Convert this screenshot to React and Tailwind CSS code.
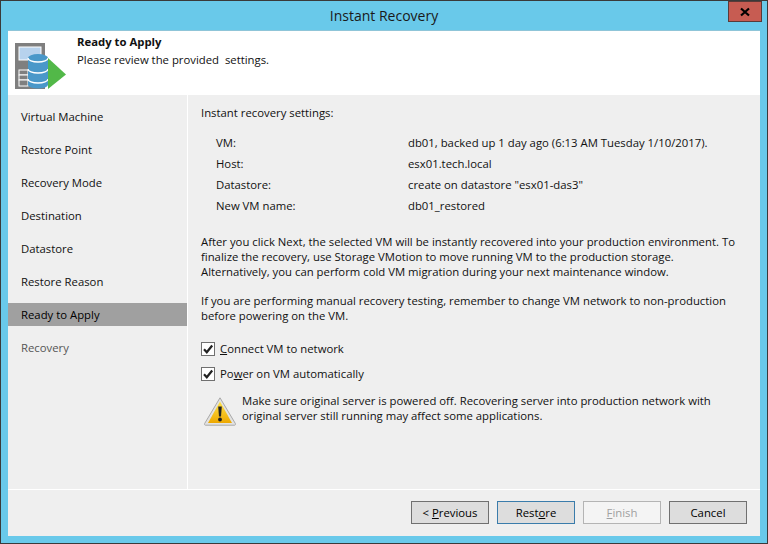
const steps = ['Virtual Machine', 'Restore Point', 'Recovery Mode', 'Destination', 'Datastore', 'Restore Reason', 'Ready to Apply', 'Recovery'];

const details = [
  ['VM:', 'db01, backed up 1 day ago (6:13 AM Tuesday 1/10/2017).'],
  ['Host:', 'esx01.tech.local'],
  ['Datastore:', 'create on datastore "esx01-das3"'],
  ['New VM name:', 'db01_restored'],
];

function WizardIcon() {
  return (
    <svg width="56" height="50" viewBox="0 0 56 50" className="shrink-0">
      <rect x="0" y="0" width="30" height="46" fill="#7f7f7f" />
      <rect x="4" y="4" width="22" height="13" fill="#b7d2ed" stroke="#fff" strokeWidth="1" />
      <rect x="4" y="27" width="9" height="5" fill="#7f7f7f" stroke="#fff" />
      <rect x="4" y="32" width="9" height="5" fill="#7f7f7f" stroke="#fff" />
      <rect x="4" y="37" width="9" height="6" fill="#7f7f7f" stroke="#fff" />
      <path d="M13 16a10 4 0 0 1 20 0v27a10 3.5 0 0 1-20 0z" fill="#4a98c9" transform="translate(0 -1)" />
      <path d="M13 15a10 4 0 0 0 20 0M13 26a10 4 0 0 0 20 0M13 36a10 4 0 0 0 20 0" fill="none" stroke="#fff" strokeWidth="1.3" />
      <path d="M33 15l18 16.5L33 46z" fill="#52b848" />
    </svg>
  );
}

function WarningIcon() {
  return (
    <svg width="32" height="29" viewBox="0 0 32 29" className="shrink-0">
      <defs>
        <linearGradient id="warn" x1="0" y1="0" x2="0" y2="1">
          <stop offset="0" stopColor="#ffe24a" />
          <stop offset="1" stopColor="#eda800" />
        </linearGradient>
      </defs>
      <path d="M16 .8L31.4 26.6a1 1 0 0 1-.9 1.6H1.5a1 1 0 0 1-.9-1.6z" fill="#e2e2e2" stroke="#a8a8a8" />
      <path d="M16 4.5L28 26H4z" fill="url(#warn)" />
      <path d="M14.2 9.5h3.6l-.8 10h-2z" fill="#222" />
      <circle cx="16" cy="22.5" r="1.9" fill="#222" />
    </svg>
  );
}

function Check({ label }) {
  return (
    <div className="flex items-center h-[17px]">
      <span className="w-[14px] h-[14px] border border-[#707070] bg-white flex items-center justify-center">
        <svg width="12" height="12" viewBox="0 0 12 12">
          <path d="M2 6.2l2.8 3L10.2 2.5" fill="none" stroke="#222" strokeWidth="2.2" />
        </svg>
      </span>
      <span className="ml-[5px]">{label}</span>
    </div>
  );
}

function Btn({ children, kind }) {
  const cls = kind === 'default'
    ? 'border-[#3a7cab] bg-[#dddddd] text-black'
    : kind === 'disabled'
      ? 'border-[#b4b4b4] bg-[#f4f4f4] text-[#a0a0a0]'
      : 'border-[#707070] bg-[#dddddd] text-black';
  return (
    <div className={`w-[78px] h-[23px] border-[1.5px] flex items-center justify-center ${cls}`}>
      <span>{children}</span>
    </div>
  );
}

export default function App() {
  return (
    <div className="w-[768px] h-[544px] bg-[#69c9ea] border border-[#3a3a3a] flex flex-col text-[11.33px] leading-[16px] text-[#111] font-['Open_Sans',sans-serif] overflow-hidden">
      <div className="h-[29px] relative flex items-center justify-center text-[14px] text-[#1a1a1a]">
        Instant Recovery
        <div className="absolute right-[5px] top-0 w-[34px] h-[21px] bg-[#c75c52] border border-[#5a3a38] flex items-center justify-center">
          <svg width="10" height="10" viewBox="0 0 10 10">
            <path d="M1 1.5l8 7M9 1.5l-8 7" stroke="#000" strokeWidth="2.2" />
          </svg>
        </div>
      </div>

      <div className="mx-[7px] flex-1 flex flex-col bg-[#efefef] border-t border-[#8fc5d8]">
        <div className="h-[64px] bg-white flex pl-[7px] pt-[12px]">
          <WizardIcon />
          <div className="ml-[6px] -mt-[10px]">
            <div className="font-bold leading-[17px]">Ready to Apply</div>
            <div className="mt-[2px] whitespace-pre">Please review the provided  settings.</div>
          </div>
        </div>

        <div className="flex-1 flex border-b border-white min-h-0">
          <div className="w-[179px] pt-[10px]">
            {steps.map((s, i) => (
              <div
                key={s}
                className={`h-[23px] mb-[10px] pl-[13px] flex items-center ${i === 6 ? 'bg-[#a0a0a0] text-black' : ''} ${i === 7 ? 'text-[#555]' : ''}`}
              >
                {s}
              </div>
            ))}
          </div>
          <div className="w-[1px] bg-white" />
          <div className="flex-1 pl-[13px] pt-[10px]">
            <div>Instant recovery settings:</div>
            <div className="mt-[14px] flex flex-col gap-[5px]">
              {details.map(([k, v]) => (
                <div key={k} className="flex h-[16px]">
                  <div className="w-[207px] pl-[15px]">{k}</div>
                  <div className="whitespace-nowrap">{v}</div>
                </div>
              ))}
            </div>
            <p className="mt-[20px] w-[540px] leading-[15px]">
              After you click Next, the selected VM will be instantly recovered into your production environment. To finalize the recovery, use Storage VMotion to move running VM to the production storage. Alternatively, you can perform cold VM migration during your next maintenance window.
            </p>
            <p className="mt-[14px] w-[540px] leading-[15px]">
              If you are performing manual recovery testing, remember to change VM network to non-production before powering on the VM.
            </p>
            <div className="mt-[17px]"><Check label={<><u>C</u>onnect VM to network</>} /></div>
            <div className="mt-[8px]"><Check label={<>Po<u>w</u>er on VM automatically</>} /></div>
            <div className="mt-[11px] flex pl-[3px]">
              <div className="mt-[4px]"><WarningIcon /></div>
              <p className="ml-[6px] w-[480px] leading-[15px]">
                Make sure original server is powered off. Recovering server into production network with original server still running may affect some applications.
              </p>
            </div>
          </div>
        </div>

        <div className="h-[46px] flex justify-end items-start gap-[8px] pr-[13px] pt-[11px]">
          <Btn><>&lt; <u>P</u>revious</></Btn>
          <Btn kind="default"><>Rest<u>o</u>re</></Btn>
          <Btn kind="disabled"><><u>F</u>inish</></Btn>
          <Btn>Cancel</Btn>
        </div>
      </div>
      <div className="h-[7px]" />
    </div>
  );
}
